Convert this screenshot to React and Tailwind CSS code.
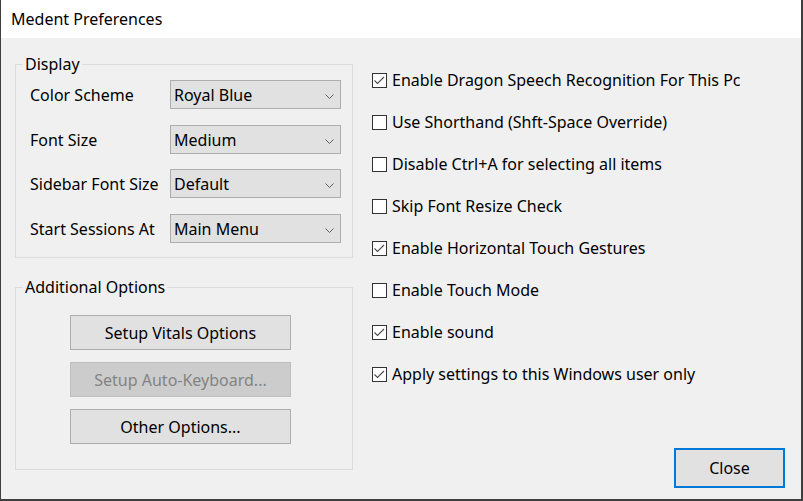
import React from 'react';

const font = { fontFamily: '"Noto Sans", "Open Sans", Arial, sans-serif' };

const selects = [
  { label: 'Color Scheme', value: 'Royal Blue', mt: 'mt-[15px]' },
  { label: 'Font Size', value: 'Medium', mt: 'mt-[16px]' },
  { label: 'Sidebar Font Size', value: 'Default', mt: 'mt-[15px]' },
  { label: 'Start Sessions At', value: 'Main Menu', mt: 'mt-[16px]' },
];

const checks = [
  { label: 'Enable Dragon Speech Recognition For This Pc', on: true },
  { label: 'Use Shorthand (Shft-Space Override)', on: false },
  { label: 'Disable Ctrl+A for selecting all items', on: false },
  { label: 'Skip Font Resize Check', on: false },
  { label: 'Enable Horizontal Touch Gestures', on: true },
  { label: 'Enable Touch Mode', on: false },
  { label: 'Enable sound', on: true },
  { label: 'Apply settings to this Windows user only', on: true },
];

function Select({ value }) {
  return (
    <div className="w-[171px] h-[29px] bg-[#e1e1e1] border border-[#adadad] flex items-center justify-between pl-[3px] pr-[6px]">
      <span>{value}</span>
      <svg width="9" height="5" viewBox="0 0 9 5" className="mt-[3px]">
        <polyline points="0.5,0.5 4.5,4.5 8.5,0.5" fill="none" stroke="#606060" strokeWidth="1" />
      </svg>
    </div>
  );
}

function Checkbox({ on }) {
  return (
    <div className="w-[15px] h-[15px] border border-[#333333] bg-white flex items-center justify-center">
      {on && (
        <svg width="13" height="13" viewBox="0 0 13 13">
          <polyline points="1.5,6.5 4.5,9.5 11,3" fill="none" stroke="#4d4d4d" strokeWidth="1.1" />
        </svg>
      )}
    </div>
  );
}

function Group({ title, className, children }) {
  return (
    <div className={`relative border border-[#dcdcdc] ${className}`}>
      <span className="absolute left-[7px] top-[-13px] bg-[#f0f0f0] px-[2px] leading-[24px]">{title}</span>
      {children}
    </div>
  );
}

function Button({ children, disabled }) {
  return (
    <div
      className={`w-[221px] h-[35px] border flex items-center justify-center ${
        disabled ? 'bg-[#cccccc] border-[#bfbfbf] text-[#838383]' : 'bg-[#e1e1e1] border-[#adadad] text-black'
      }`}
    >
      {children}
    </div>
  );
}

export default function App() {
  return (
    <div
      className="w-[803px] h-[501px] bg-[#f0f0f0] border-l border-r-2 border-b-2 border-[#3f3f3f] flex flex-col text-[16px] text-black overflow-hidden"
      style={font}
    >
      <div className="h-[38px] bg-white flex items-center pl-[10px] shrink-0">Medent Preferences</div>

      <div className="flex-1 flex">
        {/* left side */}
        <div className="pl-[14px] pt-[26px]">
          <Group title="Display" className="w-[338px] h-[194px] pl-[14px]">
            {selects.map((s) => (
              <div key={s.label} className={`flex items-center ${s.mt}`}>
                <span className="w-[140px]">{s.label}</span>
                <Select value={s.value} />
              </div>
            ))}
          </Group>

          <Group title="Additional Options" className="w-[338px] h-[183px] mt-[29px] pl-[54px] pt-[27px] flex flex-col gap-[12px]">
            <Button>Setup Vitals Options</Button>
            <Button disabled>Setup Auto-Keyboard...</Button>
            <Button>Other Options...</Button>
          </Group>
        </div>

        {/* right side */}
        <div className="flex-1 flex flex-col pl-[19px] pr-[16px] pb-[11px]">
          <div className="mt-[21px] flex flex-col">
            {checks.map((c) => (
              <div key={c.label} className="h-[42px] flex items-center gap-[5px]">
                <Checkbox on={c.on} />
                <span>{c.label}</span>
              </div>
            ))}
          </div>
          <div className="mt-auto self-end w-[111px] h-[40px] bg-[#e1e1e1] border-2 border-[#0078d7] flex items-center justify-center">
            Close
          </div>
        </div>
      </div>
    </div>
  );
}
